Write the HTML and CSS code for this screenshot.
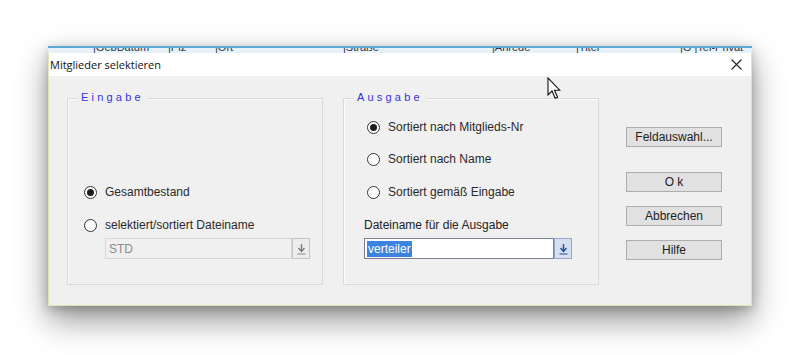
FILE: index.html
```html
<!DOCTYPE html>
<html lang="de">
<head>
    <meta charset="UTF-8">
    <title>Mitglieder selektieren</title>
    <link rel="stylesheet" href="styles.css">
</head>
<body>

<div class="window">
    <div class="behind">
        <span class="col c1">|GebDatum</span>
        <span class="col c2">|Plz</span>
        <span class="col c3">|Ort</span>
        <span class="col c4">|Straße</span>
        <span class="col c5">|Anrede</span>
        <span class="col c6">|Titel</span>
        <span class="col c7">|G |Tel-Privat</span>
    </div>

    <div class="titlebar">
        <span class="title">Mitglieder selektieren</span>
        <span class="close">
            <svg width="11" height="11" viewBox="0 0 11 11"><path d="M0.5 0.5 L10.5 10.5 M10.5 0.5 L0.5 10.5" stroke="#222" stroke-width="1.1" fill="none"/></svg>
        </span>
    </div>

    <div class="dialog">
        <div class="group eingabe">
            <span class="legend">Eingabe</span>
            <label class="radio-row first">
                <input type="radio" name="input" checked> Gesamtbestand
            </label>
            <label class="radio-row second">
                <input type="radio" name="input"> selektiert/sortiert Dateiname
            </label>
            <div class="combo disabled">
                <span class="combo-text">STD</span>
                <span class="combo-btn">
                    <svg width="9" height="12" viewBox="0 0 9 12"><path d="M4.5 1 V8 M1.5 5 L4.5 8.5 L7.5 5" stroke="#777" stroke-width="1.3" fill="none"/><path d="M0.5 11 H8.5" stroke="#888" stroke-width="1"/></svg>
                </span>
            </div>
        </div>

        <div class="group ausgabe">
            <span class="legend">Ausgabe</span>
            <label class="radio-row r1">
                <input type="radio" name="output" checked> Sortiert nach Mitglieds-Nr
            </label>
            <label class="radio-row r2">
                <input type="radio" name="output"> Sortiert nach Name
            </label>
            <label class="radio-row r3">
                <input type="radio" name="output"> Sortiert gemäß Eingabe
            </label>
            <p class="field-label">Dateiname für die Ausgabe</p>
            <div class="combo active">
                <span class="combo-text"><span class="selected">verteiler</span></span>
                <span class="combo-btn">
                    <svg width="9" height="12" viewBox="0 0 9 12"><path d="M4.5 1 V8 M1.5 5 L4.5 8.5 L7.5 5" stroke="#1d4f9e" stroke-width="1.4" fill="none"/><path d="M0.5 11 H8.5" stroke="#1d4f9e" stroke-width="1"/></svg>
                </span>
            </div>
        </div>

        <div class="buttons">
            <button class="btn feld">Feldauswahl...</button>
            <button class="btn ok">O k</button>
            <button class="btn">Abbrechen</button>
            <button class="btn">Hilfe</button>
        </div>
    </div>
</div>

<svg class="cursor" width="14" height="23" viewBox="0 0 14 23">
    <path d="M1 1 L1 18 L5 14 L8.2 21.2 L10.6 20.2 L7.5 13.2 L12.8 13.2 Z" fill="#fff" stroke="#111" stroke-width="1.1" stroke-linejoin="miter"/>
</svg>

</body>
</html>
```

FILE: styles.css
```css
body {
    margin: 0;
    background: #fff;
    font-family: "Liberation Sans", Arial, sans-serif;
    font-size: 12px;
    color: #222;
    position: relative;
    height: 355px;
    overflow: hidden;
}
.window {
    margin: 46px 0 0 48px;
    width: 704px;
    box-shadow: 0 14px 30px rgba(0, 0, 0, 0.42), 0 3px 10px rgba(0, 0, 0, 0.22);
}
.behind {
    height: 5px;
    border-top: 2px solid #5aa8d8;
    background: #e6f1f8;
    overflow: hidden;
    position: relative;
    font-size: 11px;
    color: #334;
}
.col {
    position: absolute;
    top: -7px;
    white-space: nowrap;
}
.c1 { left: 45px; }
.c2 { left: 120px; }
.c3 { left: 167px; }
.c4 { left: 295px; }
.c5 { left: 444px; }
.c6 { left: 528px; }
.c7 { left: 632px; }
.titlebar {
    height: 23px;
    background: #fff;
    display: flex;
    align-items: center;
    justify-content: space-between;
    border-left: 1px solid #e4e6c0;
    border-right: 1px solid #e4e6c0;
    padding: 0 8px 0 1px;
}
.title {
    font-family: "Open Sans", sans-serif;
    font-size: 11px;
    color: #111;
}
.close {
    display: flex;
    margin-right: 1px;
}
.dialog {
    background: #f0f0f0;
    height: 230px;
    border: 1px solid #e0e3b3;
    border-top: none;
    display: flex;
    padding: 22px 0 0 18px;
    box-sizing: border-box;
}
.group {
    position: relative;
    width: 256px;
    height: 187px;
    box-sizing: border-box;
    border: 1px solid #dadada;
    box-shadow: inset 1px 1px 0 #fafafa;
}
.ausgabe {
    margin-left: 20px;
}
.legend {
    position: absolute;
    top: -8px;
    left: 10px;
    padding: 0 3px;
    background: #f0f0f0;
    color: #3434dc;
    font-size: 11px;
    letter-spacing: 3.2px;
}
.radio-row {
    display: flex;
    align-items: center;
    height: 16px;
    white-space: nowrap;
    color: #2a2a2a;
}
.radio-row input {
    appearance: none;
    width: 13px;
    height: 13px;
    margin: 0 8px 0 0;
    border: 1px solid #333;
    border-radius: 50%;
    background: #fff;
    display: grid;
    place-items: center;
}
.radio-row input:checked::after {
    content: "";
    width: 7px;
    height: 7px;
    border-radius: 50%;
    background: #1e1e1e;
}
.eingabe {
    padding-left: 16px;
}
.eingabe .first { margin-top: 85px; }
.eingabe .second { margin-top: 17px; }
.ausgabe {
    padding-left: 23px;
}
.ausgabe .r1 { margin-top: 20px; }
.ausgabe .r2 { margin-top: 16px; }
.ausgabe .r3 { margin-top: 17px; }
.field-label {
    margin: 18px 0 0 -3px;
    line-height: 14px;
}
.combo {
    display: flex;
    height: 21px;
    margin-top: 6px;
}
.eingabe .combo {
    margin-left: 21px;
    width: 205px;
    margin-top: 5px;
}
.ausgabe .combo {
    margin-left: -3px;
    width: 208px;
}
.combo-text {
    flex: 1;
    display: flex;
    align-items: center;
    padding-left: 3px;
    box-sizing: border-box;
}
.combo-btn {
    width: 18px;
    display: flex;
    align-items: center;
    justify-content: center;
    box-sizing: border-box;
}
.disabled .combo-text {
    background: #f0f0f0;
    border: 1px solid #d6d6d6;
    color: #8a8a8a;
}
.disabled .combo-btn {
    background: #ececec;
    border: 1px solid #c4c4c4;
}
.active .combo-text {
    background: #fff;
    border: 1px solid #7a7f96;
    padding-left: 2px;
}
.active .combo-btn {
    background: #d6dff0;
    border: 1px solid #9aa8c6;
}
.selected {
    background: #3a84e0;
    color: #fff;
    padding: 1px 1px;
}
.buttons {
    margin-left: 27px;
    display: flex;
    flex-direction: column;
    width: 96px;
}
.btn {
    height: 20px;
    padding: 0;
    font-family: "Liberation Sans", Arial, sans-serif;
    font-size: 12px;
    color: #222;
    background: #e1e1e1;
    border: 1px solid #adadad;
    margin-top: 14px;
}
.feld {
    margin-top: 29px;
}
.ok {
    margin-top: 25px;
}
.cursor {
    position: absolute;
    left: 547px;
    top: 77px;
}
```
